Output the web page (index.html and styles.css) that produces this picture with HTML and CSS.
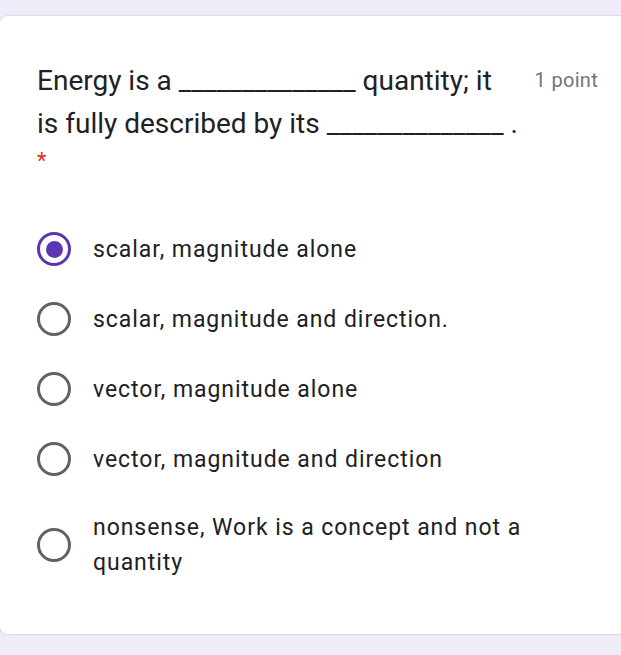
FILE: index.html
```html
<!DOCTYPE html>
<html>
<head>
<meta charset="utf-8">
<link rel="stylesheet" href="styles.css">
</head>
<body>
<div class="card">
  <div class="head">
    <div class="title">Energy is a ______________ quantity; it<br>is fully described by its ______________ .</div>
    <div class="points">1 point</div>
  </div>
  <div class="req">*</div>
  <div class="options">
    <div class="opt"><span class="radio on"><span class="dot"></span></span><span class="label">scalar, magnitude alone</span></div>
    <div class="opt"><span class="radio"></span><span class="label">scalar, magnitude and direction.</span></div>
    <div class="opt"><span class="radio"></span><span class="label">vector, magnitude alone</span></div>
    <div class="opt"><span class="radio"></span><span class="label">vector, magnitude and direction</span></div>
    <div class="opt"><span class="radio"></span><span class="label">nonsense, Work is a concept and not a quantity</span></div>
  </div>
</div>
</body>
</html>
```
FILE: styles.css
```css
html, body { margin: 0; padding: 0; }
body {
  background: #efebf8;
  font-family: Roboto, "Noto Sans", Arial, sans-serif;
  padding-top: 16px;
  height: 655px;
  box-sizing: border-box;
  overflow: hidden;
}
.card {
  background: #fff;
  border-radius: 8px 0 0 8px;
  box-shadow: 0 0 0 1px #dedce4, 0 1px 2px rgba(0,0,0,0.06);
  height: 618px;
  box-sizing: border-box;
  padding: 43px 23px 0 37px;
}
.head {
  display: flex;
  align-items: flex-start;
}
.title {
  width: 495px;
  font-size: 28px;
  line-height: 43px;
  color: #202124;
}
.points {
  margin-left: auto;
  font-size: 20px;
  letter-spacing: 0.3px;
  line-height: 43px;
  color: #70757a;
}
.req {
  color: #d93025;
  font-size: 22px;
  line-height: 22px;
  margin-top: 5px;
  height: 22px;
}
.options {
  margin-top: 42px;
}
.opt {
  display: flex;
  align-items: center;
  min-height: 70px;
  padding: 17.5px 0;
  box-sizing: border-box;
}
.opt:last-child { padding-top: 16px; }
.radio {
  flex: none;
  width: 34px;
  height: 34px;
  box-sizing: border-box;
  border: 3.5px solid #5f6368;
  border-radius: 50%;
  display: flex;
  align-items: center;
  justify-content: center;
}
.radio.on { border-color: #5e35b1; }
.dot {
  width: 17px;
  height: 17px;
  border-radius: 50%;
  background: #5e35b1;
}
.label {
  margin-left: 22px;
  font-size: 23px;
  letter-spacing: 0.95px;
  line-height: 35px;
  color: #202124;
  width: 470px;
}
```
